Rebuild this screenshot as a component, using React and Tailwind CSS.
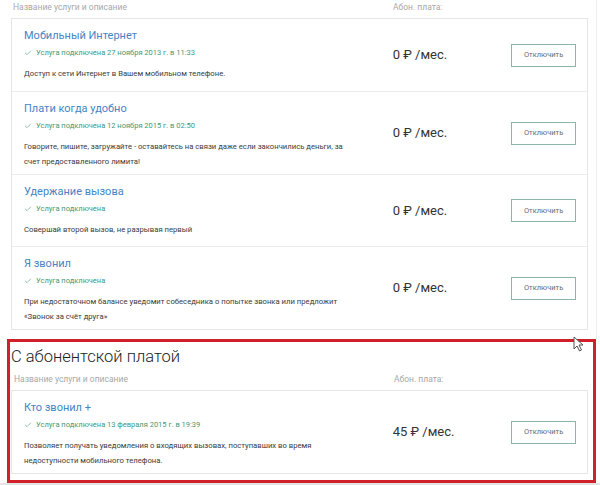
import { Check } from "lucide-react";

const free = [
  {
    title: "Мобильный Интернет",
    status: "Услуга подключена 27 ноября 2013 г. в 11:33",
    desc: ["Доступ к сети Интернет в Вашем мобильном телефоне."],
    price: "0",
  },
  {
    title: "Плати когда удобно",
    status: "Услуга подключена 12 ноября 2015 г. в 02:50",
    desc: [
      "Говорите, пишите, загружайте - оставайтесь на связи даже если закончились деньги, за",
      "счет предоставленного лимита!",
    ],
    price: "0",
  },
  {
    title: "Удержание вызова",
    status: "Услуга подключена",
    desc: ["Совершай второй вызов, не разрывая первый"],
    price: "0",
  },
  {
    title: "Я звонил",
    status: "Услуга подключена",
    desc: [
      "При недостаточном балансе уведомит собеседника о попытке звонка или предложит",
      "«Звонок за счёт друга»",
    ],
    price: "0",
  },
];

const paid = [
  {
    title: "Кто звонил +",
    status: "Услуга подключена 13 февраля 2015 г. в 19:39",
    desc: [
      "Позволяет получать уведомления о входящих вызовах, поступавших во время",
      "недоступности мобильного телефона.",
    ],
    price: "45",
  },
];

function Labels() {
  return (
    <div className="flex text-[8.5px] leading-[12px] text-[#a8a8a8]">
      <div className="w-[381px] pl-[1px]">Название услуги и описание</div>
      <div>Абон. плата:</div>
    </div>
  );
}

function ServiceRow({ s, first }) {
  return (
    <div
      className={`flex items-center min-h-[72px] pl-[12px] pr-[11px] ${
        first ? "" : "border-t border-[#ececec]"
      }`}
    >
      <div className="w-[370px] self-start pt-[10px] pb-[5px]">
        <div className="text-[11px] leading-[14px] text-[#4585c4]">{s.title}</div>
        <div className="mt-[4px] flex items-center gap-[4px] text-[7.5px] leading-[11px] text-[#3f9876]">
          <Check size={8} strokeWidth={1.75} />
          <span>{s.status}</span>
        </div>
        <div className="mt-[8px] text-[7.7px] leading-[15px] text-[#3a3a3a]">
          {s.desc.map((d) => (
            <div key={d}>{d}</div>
          ))}
        </div>
      </div>
      <div className="w-[119px] text-[13px] text-[#333]">
        {s.price} ₽ /мес.
      </div>
      <button className="w-[65px] h-[23px] border border-[#8db4a6] text-[7.5px] text-[#6a6a6a] bg-white">
        Отключить
      </button>
    </div>
  );
}

function Card({ items }) {
  return (
    <div className="border border-[#e6e6e6] bg-white">
      {items.map((s, i) => (
        <ServiceRow key={s.title} s={s} first={i === 0} />
      ))}
    </div>
  );
}

export default function App() {
  return (
    <div
      className="relative w-[600px] h-[485px] bg-white overflow-hidden"
      style={{ fontFamily: "Roboto, 'Noto Sans', sans-serif" }}
    >
      <div className="w-[597px] border-r border-[#efefef] pl-[11px] pr-[8px] pt-[1px] pb-[9px]">
        <div className="pl-[1px]">
          <Labels />
        </div>
        <div className="mt-[5px]">
          <Card items={free} />
        </div>
      </div>
      <div className="ml-[7px] w-[589px] h-[144px] border-[3px] border-[#d0212b] pl-[1px] pr-[5px] pt-[4px]">
        <div className="text-[16.5px] leading-[22px] font-light text-[#222]">С абонентской платой</div>
        <div className="mt-[5px] pl-[2px]">
          <Labels />
        </div>
        <div className="mt-[5px]">
          <Card items={paid} />
        </div>
      </div>
      <div className="h-[4px] bg-[#e4e4e4]" />
      <svg
        className="absolute left-[573px] top-[336px]"
        width="12"
        height="16"
        viewBox="0 0 12 16"
      >
        <path
          d="M1 1 L1 13 L4 10 L6.5 15 L8.5 14 L6 9 L10 9 Z"
          fill="#fff"
          stroke="#555"
          strokeWidth="1"
          strokeLinejoin="round"
        />
      </svg>
    </div>
  );
}
